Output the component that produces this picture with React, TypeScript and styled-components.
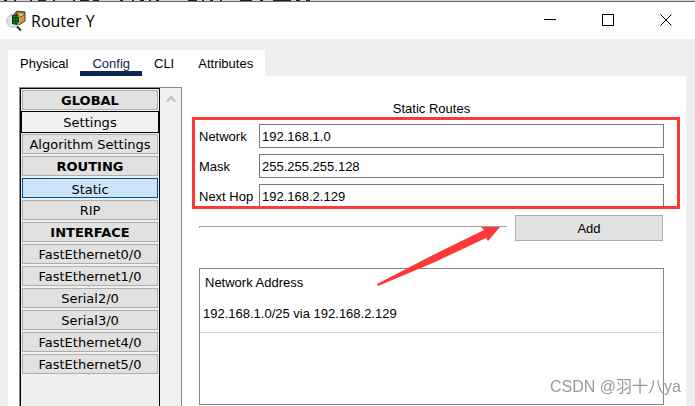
import React from "react";
import styled, { createGlobalStyle, css } from "styled-components";

const Global = createGlobalStyle`
  * { box-sizing: border-box; }
  body { margin: 0; background: #efefef; color: #000; font: 13px/16px "Liberation Sans", Arial, sans-serif; overflow: hidden; }
  button, input { font: inherit; color: inherit; margin: 0; border-radius: 0; }
`;

const Page = styled.div`
  display: flex;
  flex-direction: column;
  height: 100vh;
`;

const Backdrop = styled.div`
  height: 2px;
  flex: none;
  background: #d4d4d4;
  border-bottom: 1px solid #666;
  svg { display: block; }
`;

const TitleBar = styled.header`
  display: flex;
  align-items: center;
  flex: none;
  height: 37px;
  padding-left: 5px;
  background: #fff;
`;

const Title = styled.h1`
  flex: 1;
  margin: 0 0 0 4px;
  font: 16px/22px "Open Sans", "Noto Sans", sans-serif;
`;

const WindowButton = styled.button`
  display: grid;
  place-items: center;
  align-self: flex-start;
  width: 58px;
  height: 36px;
  padding: 0;
  border: 0;
  background: none;
`;

const Body = styled.main`
  display: flex;
  flex-direction: column;
  flex: 1;
  min-height: 0;
  padding: 11px 9px 0 8px;
`;

const Tabs = styled.nav`
  display: flex;
  align-self: flex-start;
  background: #fff;
`;

const Tab = styled.button<{ $active?: boolean }>`
  height: 26px;
  padding: 1px 12px 0;
  border: 0;
  border-top: 5px solid transparent;
  border-bottom: 5px solid ${(p) => (p.$active ? "#0b274b" : "transparent")};
  background: none;
  color: ${(p) => (p.$active ? "#0b274b" : "#000")};
`;

const Panel = styled.section`
  display: flex;
  flex: 1;
  min-height: 0;
  gap: 17px;
  padding: 11px 22px 0 11px;
  background: #fff;
`;

const Sidebar = styled.aside`
  display: flex;
  flex: none;
  width: 163px;
  border: 1px solid #868a94;
  border-bottom: 0;
  background: #efefef;
`;

const Menu = styled.div`
  display: flex;
  flex-direction: column;
  gap: 2px;
  width: 140px;
  padding: 1px;
  border: 1px solid #000;
  border-bottom: 0;
  font: 13px/18px "DejaVu Sans", Verdana, sans-serif;
`;

const itemBox = css`
  flex: none;
  height: 20px;
  margin: 0;
  padding: 1px 0 0;
  border: 1px solid #adadad;
  background: #e1e1e1;
  text-align: center;
  white-space: nowrap;
`;

const MenuHeading = styled.h2`
  ${itemBox}
  font: inherit;
  font-weight: bold;
`;

const MenuItem = styled.button<{ $kind?: string }>`
  ${itemBox}
  ${(p) => p.$kind === "selected" && css`
    padding-top: 2px;
    border-color: #00549b;
    background: #cce4f7;
  `}
  ${(p) => p.$kind === "default" && css`
    border-color: #f0f0f0;
    background: #f0f0f0;
    outline: 1px solid #000;
  `}
`;

const ScrollTrack = styled.div`
  display: flex;
  justify-content: center;
  flex: 1;
  padding-top: 7px;
  background: #f0f0f0;
`;

const Content = styled.div`
  display: flex;
  flex-direction: column;
  flex: 1;
  min-width: 0;
`;

const Heading = styled.h2`
  margin: 14px 0 7px;
  font: inherit;
  text-align: center;
`;

const Fields = styled.form`
  position: relative;
  display: grid;
  grid-template-columns: 60px 1fr;
  gap: 6px 0;
  align-items: center;
`;

const FieldLabel = styled.label`
  padding-top: 2px;
`;

const Field = styled.input`
  width: 100%;
  height: 24px;
  padding: 0 2px;
  border: 1px solid #7a7a7a;
  background: #fff;
  outline: 0;
`;

const Highlight = styled.div`
  position: absolute;
  inset: -7px -16px -1px -7px;
  border: 3px solid #fe3837;
  pointer-events: none;
`;

const ActionRow = styled.div`
  position: relative;
  display: flex;
  gap: 8px;
  margin: 7px 1px 27px 0;
`;

const Divider = styled.hr`
  flex: 1;
  height: 2px;
  margin: 11px 0 0;
  border: 0;
  border-top: 1px solid #a0a0a0;
  border-left: 1px solid #a0a0a0;
`;

const AddButton = styled.button`
  width: 148px;
  height: 26px;
  padding: 2px 0 0;
  border: 1px solid #adadad;
  background: #e1e1e1;
`;

const Arrow = styled.svg`
  position: absolute;
  top: 11px;
  right: 162px;
  pointer-events: none;
`;

const TableBox = styled.div`
  flex: 1;
  margin-bottom: 1px;
  border: 1px solid #828790;
`;

const Table = styled.table`
  width: 100%;
  border-collapse: collapse;
  th { height: 28px; padding: 0 5px; font-weight: normal; text-align: left; }
  td { height: 35px; padding: 0 3px; border-bottom: 1px solid #d8d8d8; }
`;

const Watermark = styled.div`
  position: fixed;
  right: 14px;
  bottom: 7px;
  color: #999;
  font: 16px/24px "Liberation Sans", "Noto Sans CJK SC", sans-serif;
`;

const PacketIcon = () => (
  <svg width="22" height="22" viewBox="0 0 22 22" aria-hidden="true">
    <path d="M9 4 12 1 20 2 20 11 14 15 9 12Z" fill="#c89c3e" stroke="#4a3816" />
    <path d="M11 3 20 3 16 7Z" fill="#efce80" stroke="#4a3816" strokeWidth=".7" />
    <circle cx="8" cy="11" r="6.3" fill="#e1e5e2" stroke="#bdbdbd" />
    <path d="M7 5 12 4 14 8 14 12 12 15 7 14Z" fill="#063f0c" />
    <path d="M8 6.500h4M8 9.500h6M8 12.500h5M9.500 5v9M12 6v8" stroke="#21a934" strokeWidth=".5" />
    <path d="M12 16.500 16 20.500" stroke="#2b2b2b" strokeWidth="2" />
  </svg>
);

const menu = [
  { text: "GLOBAL", heading: true },
  { text: "Settings", kind: "default" },
  { text: "Algorithm Settings" },
  { text: "ROUTING", heading: true },
  { text: "Static", kind: "selected" },
  { text: "RIP" },
  { text: "INTERFACE", heading: true },
  { text: "FastEthernet0/0" },
  { text: "FastEthernet1/0" },
  { text: "Serial2/0" },
  { text: "Serial3/0" },
  { text: "FastEthernet4/0" },
  { text: "FastEthernet5/0" },
];

const fields = [
  { id: "network", label: "Network", value: "192.168.1.0" },
  { id: "mask", label: "Mask", value: "255.255.255.128" },
  { id: "hop", label: "Next Hop", value: "192.168.2.129" },
];

export default function App() {
  return (
    <Page>
      <Global />
      <Backdrop>
        <svg width="320" height="1" aria-hidden="true">
          <path
            d="M4 .5h3M14 .5h2M30 .5h2M38 .5h8M53 .5h2M73 .5h2M80 .5h9M93 .5h6M120 .5h3M132 .5h2M140 .5h4M149 .5h2M156 .5h3M188 .5h9M202 .5h2M210 .5h3M220 .5h2M240 .5h12M260 .5h3M273 .5h18M296 .5h4M306 .5h4"
            stroke="#222"
          />
        </svg>
      </Backdrop>
      <TitleBar>
        <PacketIcon />
        <Title>Router Y</Title>
        <WindowButton aria-label="Minimize">
          <svg width="12" height="12"><path d="M0 5.500H12" stroke="#000" /></svg>
        </WindowButton>
        <WindowButton aria-label="Maximize">
          <svg width="12" height="12"><path d="M.5 .5H11.500V11.500H.5Z" fill="none" stroke="#000" /></svg>
        </WindowButton>
        <WindowButton aria-label="Close">
          <svg width="12" height="12"><path d="M.5 .5 11.500 11.500M11.500 .5 .5 11.500" stroke="#000" /></svg>
        </WindowButton>
      </TitleBar>
      <Body>
        <Tabs>
          {["Physical", "Config", "CLI", "Attributes"].map((name) => (
            <Tab key={name} $active={name === "Config"}>{name}</Tab>
          ))}
        </Tabs>
        <Panel>
          <Sidebar>
            <Menu>
              {menu.map((item) =>
                item.heading ? (
                  <MenuHeading key={item.text}>{item.text}</MenuHeading>
                ) : (
                  <MenuItem key={item.text} $kind={item.kind}>{item.text}</MenuItem>
                ),
              )}
            </Menu>
            <ScrollTrack>
              <svg width="10" height="8" aria-hidden="true">
                <path d="M1 6.500 5 2 9 6.500" fill="none" stroke="#bfbfbf" strokeWidth="2" />
              </svg>
            </ScrollTrack>
          </Sidebar>
          <Content>
            <Heading>Static Routes</Heading>
            <Fields>
              {fields.map((f) => (
                <React.Fragment key={f.id}>
                  <FieldLabel htmlFor={f.id}>{f.label}</FieldLabel>
                  <Field id={f.id} defaultValue={f.value} />
                </React.Fragment>
              ))}
              <Highlight />
            </Fields>
            <ActionRow>
              <Divider />
              <AddButton>Add</AddButton>
              <Arrow width="124" height="60" aria-hidden="true">
                <path d="M123 1 104 1 107 4 56 29 0 58 1 60 58 36 109 12 111 15Z" fill="#fe3837" />
              </Arrow>
            </ActionRow>
            <TableBox>
              <Table>
                <thead><tr><th>Network Address</th></tr></thead>
                <tbody><tr><td>192.168.1.0/25 via 192.168.2.129</td></tr></tbody>
              </Table>
            </TableBox>
          </Content>
        </Panel>
      </Body>
      <Watermark>CSDN @羽十八ya</Watermark>
    </Page>
  );
}
